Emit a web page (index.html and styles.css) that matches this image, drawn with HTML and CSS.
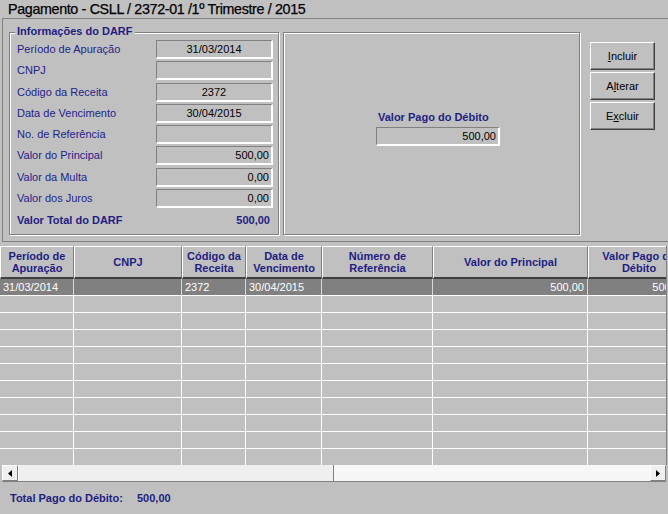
FILE: index.html
```html
<!DOCTYPE html>
<html lang="pt">
<head>
<meta charset="utf-8">
<title>Pagamento</title>
<link rel="stylesheet" href="styles.css">
</head>
<body>
<div class="title">Pagamento - CSLL / 2372-01 /1º Trimestre / 2015</div>
<div class="panel">
  <div class="group">
    <span class="legend">Informações do DARF</span>
    <div class="fields">
      <div class="frow"><span class="lbl">Período de Apuração</span><span class="box c">31/03/2014</span></div>
      <div class="frow"><span class="lbl">CNPJ</span><span class="box c"></span></div>
      <div class="frow"><span class="lbl">Código da Receita</span><span class="box c">2372</span></div>
      <div class="frow"><span class="lbl">Data de Vencimento</span><span class="box c">30/04/2015</span></div>
      <div class="frow"><span class="lbl">No. de Referência</span><span class="box c"></span></div>
      <div class="frow"><span class="lbl">Valor do Principal</span><span class="box r">500,00</span></div>
      <div class="frow"><span class="lbl">Valor da Multa</span><span class="box r">0,00</span></div>
      <div class="frow"><span class="lbl">Valor dos Juros</span><span class="box r">0,00</span></div>
    </div>
    <div class="total"><span>Valor Total do DARF</span><span>500,00</span></div>
  </div>
  <div class="pane">
    <div class="plbl">Valor Pago do Débito</div>
    <div class="box r pbox">500,00</div>
  </div>
  <div class="btns">
    <button class="btn"><u>I</u>ncluir</button>
    <button class="btn">A<u>l</u>terar</button>
    <button class="btn">E<u>x</u>cluir</button>
  </div>
</div>
<div class="grid">
  <div class="view">
    <div class="row head">
      <div class="hc">Período de Apuração</div>
      <div class="hc">CNPJ</div>
      <div class="hc">Código da Receita</div>
      <div class="hc">Data de Vencimento</div>
      <div class="hc">Número de Referência</div>
      <div class="hc">Valor do Principal</div>
      <div class="hc">Valor Pago do Débito</div>
    </div>
    <div class="body">
      <div class="row sel">
        <div class="dc">31/03/2014</div><div class="dc"></div><div class="dc">2372</div><div class="dc">30/04/2015</div><div class="dc"></div><div class="dc r">500,00</div><div class="dc r">500,00</div>
      </div>
      <div class="row"><div class="dc"></div><div class="dc"></div><div class="dc"></div><div class="dc"></div><div class="dc"></div><div class="dc"></div><div class="dc"></div></div>
      <div class="row"><div class="dc"></div><div class="dc"></div><div class="dc"></div><div class="dc"></div><div class="dc"></div><div class="dc"></div><div class="dc"></div></div>
      <div class="row"><div class="dc"></div><div class="dc"></div><div class="dc"></div><div class="dc"></div><div class="dc"></div><div class="dc"></div><div class="dc"></div></div>
      <div class="row"><div class="dc"></div><div class="dc"></div><div class="dc"></div><div class="dc"></div><div class="dc"></div><div class="dc"></div><div class="dc"></div></div>
      <div class="row"><div class="dc"></div><div class="dc"></div><div class="dc"></div><div class="dc"></div><div class="dc"></div><div class="dc"></div><div class="dc"></div></div>
      <div class="row"><div class="dc"></div><div class="dc"></div><div class="dc"></div><div class="dc"></div><div class="dc"></div><div class="dc"></div><div class="dc"></div></div>
      <div class="row"><div class="dc"></div><div class="dc"></div><div class="dc"></div><div class="dc"></div><div class="dc"></div><div class="dc"></div><div class="dc"></div></div>
      <div class="row"><div class="dc"></div><div class="dc"></div><div class="dc"></div><div class="dc"></div><div class="dc"></div><div class="dc"></div><div class="dc"></div></div>
      <div class="row"><div class="dc"></div><div class="dc"></div><div class="dc"></div><div class="dc"></div><div class="dc"></div><div class="dc"></div><div class="dc"></div></div>
      <div class="row"><div class="dc"></div><div class="dc"></div><div class="dc"></div><div class="dc"></div><div class="dc"></div><div class="dc"></div><div class="dc"></div></div>
    </div>
  </div>
  <div class="hscroll">
    <div class="sbtn"><svg width="4" height="7" viewBox="0 0 4 7"><polygon points="4,0 4,7 0,3.5" fill="#000"/></svg></div>
    <div class="thumb"></div>
    <div class="track"></div>
    <div class="sbtn"><svg width="4" height="7" viewBox="0 0 4 7"><polygon points="0,0 0,7 4,3.5" fill="#000"/></svg></div>
  </div>
</div>
<div class="footer">
  <span class="flbl">Total Pago do Débito:</span><span>500,00</span>
</div>
</body>
</html>
```
FILE: styles.css
```css
html, body {
  margin: 0;
  padding: 0;
}
body {
  width: 668px;
  height: 514px;
  overflow: hidden;
  background: #c0c0c0;
  font-family: "Liberation Sans", Arial, sans-serif;
  font-size: 11px;
  color: #000;
}
.title {
  height: 18px;
  line-height: 18px;
  padding-left: 8px;
  font-size: 14.3px;
  letter-spacing: -0.35px;
  color: #000;
  -webkit-text-stroke: 0.25px #000;
  white-space: nowrap;
}
.panel {
  box-sizing: border-box;
  margin-left: 2px;
  height: 224px;
  border-left: 1px solid #808080;
  border-top: 1px solid #808080;
  border-bottom: 1px solid #808080;
  padding: 13px 0 0 6px;
  display: flex;
  align-items: flex-start;
}
.group, .pane {
  box-sizing: border-box;
  height: 203px;
  border: 1px solid #808080;
  box-shadow: inset 1px 1px 0 #fff, 1px 1px 0 #fff;
}
.group {
  position: relative;
  width: 270px;
  padding: 7px 0 0 7px;
}
.legend {
  position: absolute;
  left: 5px;
  top: -9px;
  padding: 0 2px;
  background: #c0c0c0;
  line-height: 14px;
  font-weight: bold;
  color: #1e1e82;
}
.fields {
  display: flex;
  flex-direction: column;
}
.frow {
  display: flex;
  align-items: flex-start;
  height: 21.3px;
}
.lbl {
  width: 139px;
  line-height: 19px;
  color: #23238a;
}
.box {
  box-sizing: border-box;
  display: block;
  width: 117px;
  height: 19px;
  line-height: 16px;
  border-style: solid;
  border-width: 1px 2px 2px 1px;
  border-color: #808080 #fff #fff #808080;
  padding: 0 2px;
  color: #000;
  white-space: nowrap;
}
.box.c { text-align: center; }
.box.r { text-align: right; }
.total {
  display: flex;
  justify-content: space-between;
  width: 253px;
  margin-top: 0.6px;
  line-height: 19px;
  font-weight: bold;
  color: #1e1e82;
}
.pane {
  width: 297px;
  margin-left: 4px;
  padding: 77px 0 0 92px;
}
.plbl {
  line-height: 14px;
  padding-left: 2px;
  font-weight: bold;
  color: #1e1e82;
}
.pbox {
  width: 124px;
  margin-top: 3px;
}
.btns {
  display: flex;
  flex-direction: column;
  gap: 2px;
  margin: 10px 0 0 10px;
}
.btn {
  box-sizing: border-box;
  width: 65px;
  height: 28px;
  padding: 0;
  margin: 0;
  background: #c0c0c0;
  border-style: solid;
  border-width: 1px;
  border-color: #fff #404040 #404040 #fff;
  box-shadow: inset -1px -1px 0 #808080;
  font-family: "Liberation Sans", Arial, sans-serif;
  font-size: 11px;
  color: #000;
}
.grid {
  padding-top: 4px;
}
.view {
  width: 666px;
  height: 219px;
  overflow: hidden;
  border-right: 1px solid #808080;
}
.row {
  display: grid;
  grid-template-columns: 74px 108px 64px 76px 111px 155px 102px;
  width: 690px;
}
.hc {
  box-sizing: border-box;
  height: 33px;
  border-top: 1px solid #fff;
  border-left: 1px solid #fff;
  border-right: 1px solid #808080;
  border-bottom: 2px solid #404040;
  display: flex;
  align-items: center;
  justify-content: center;
  text-align: center;
  line-height: 12px;
  font-weight: bold;
  color: #1e1e82;
  padding: 0 2px;
}
.body {
  height: 186px;
  overflow: hidden;
}
.dc {
  box-sizing: border-box;
  height: 17px;
  line-height: 16px;
  border-right: 1px solid #fff;
  border-bottom: 1px solid #fff;
  padding: 0 3px;
  white-space: nowrap;
  overflow: hidden;
}
.dc.r { text-align: right; }
.sel .dc {
  background: #808080;
  color: #fff;
  border-right-color: #d8d8d8;
}
.hscroll {
  box-sizing: border-box;
  display: flex;
  width: 664px;
  height: 17px;
  margin-left: 2px;
  background: #f7f7f7;
  border-bottom: 1px solid #808080;
}
.sbtn {
  box-sizing: border-box;
  width: 16px;
  height: 16px;
  background: #f0f0f0;
  border-style: solid;
  border-width: 1px;
  border-color: #fff #808080 #808080 #fff;
  display: flex;
  align-items: center;
  justify-content: center;
}
.thumb {
  box-sizing: border-box;
  width: 316px;
  height: 16px;
  background: #efefef;
  border-left: 1px solid #fff;
  border-right: 1px solid #808080;
}
.track {
  flex: 1;
}
.footer {
  height: 32px;
  display: flex;
  align-items: center;
  padding-left: 10px;
  font-weight: bold;
  color: #1e1e82;
}
.flbl {
  width: 127px;
}
```
